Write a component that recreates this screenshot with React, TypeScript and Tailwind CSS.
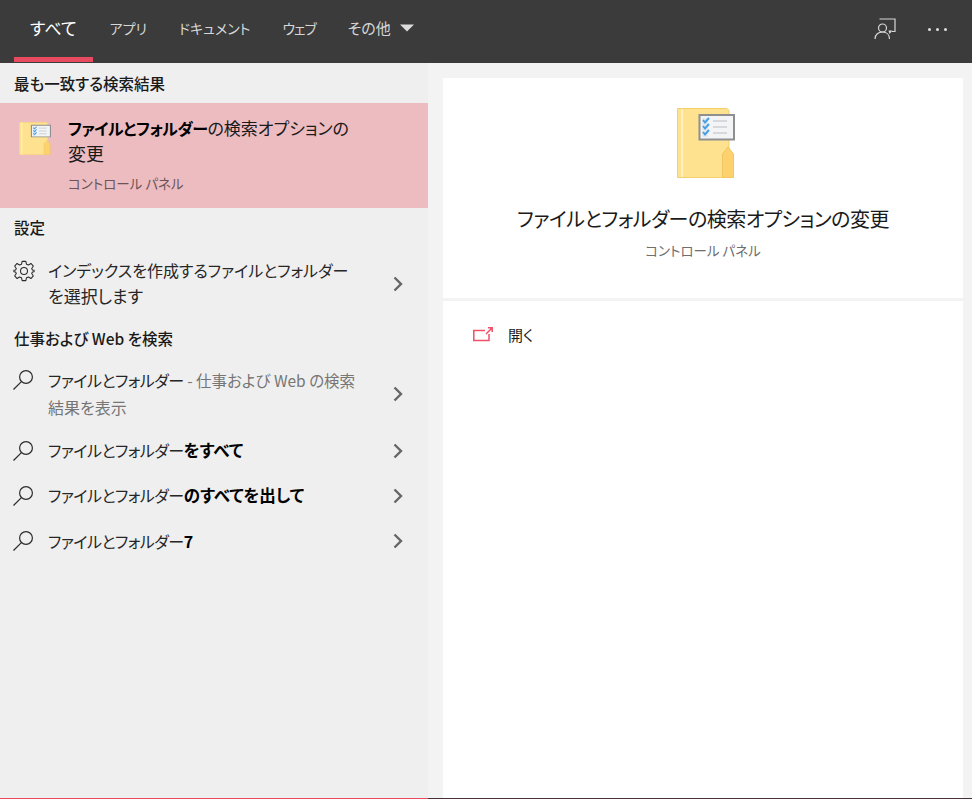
const FONT = "font-['Noto_Sans_CJK_JP','Noto_Sans',sans-serif] [font-feature-settings:'palt']"

const tabs = [
  { label: "すべて", size: "text-[17px] border-[#e84a5f] text-white mr-px" },
  { label: "アプリ", size: "text-[14px] border-transparent text-[#d6d6d6]" },
  { label: "ドキュメント", size: "text-[14px] border-transparent text-[#d6d6d6]" },
  { label: "ウェブ", size: "text-[14px] tracking-[-1px] border-transparent text-[#d6d6d6]" },
  { label: "その他", size: "text-[15px] border-transparent text-[#d6d6d6]", caret: true },
]

function FolderIcon({ className }: { className: string }) {
  return (
    <svg viewBox="0 0 58 70" preserveAspectRatio="none" className={className}>
      <path d="M0.5 0.5H50L52 2.5V69.5H0.5Z" fill="#fee28f" stroke="#f3cf6e" />
      <path d="M5 1V69" stroke="#fff0bd" strokeWidth="2" />
      <path d="M45.5 69.5V46L51 39L56.5 46V69.5Z" fill="#fdd26e" stroke="#f0c65e" />
      <path d="M22.5 7H57V31.5H22.5Z" fill="#f2f4f6" stroke="#8f8f8f" strokeWidth="2" />
      <path d="M25 10H31V29H25Z" fill="#e3e9ee" />
      <path d="M26 12L28 14.5L32 10M26 18L28 20.5L32 16M26 24L28 26.5L32 22" stroke="#4a9fe2" strokeWidth="2" fill="none" />
      <path d="M36 13H50M36 19H50M36 25H50" stroke="#b9bcbf" strokeWidth="1.2" />
    </svg>
  )
}

function SearchIcon() {
  return (
    <svg viewBox="0 0 21 20" className="w-[21px] h-5 shrink-0" fill="none" stroke="#2b2b2b" strokeWidth="1.2">
      <circle cx="13" cy="7" r="6.4" />
      <path d="M8.4 11.6L0.5 19.5" />
    </svg>
  )
}

function GearIcon() {
  return (
    <svg viewBox="0 0 24 24" className="w-[22px] h-[22px] shrink-0" fill="none" stroke="#2b2b2b" strokeWidth="1.15" strokeLinejoin="round">
      <circle cx="12" cy="12" r="3.8" />
      <path d="M10 1.5H14L14.7 4.6L16.9 5.5L19.6 3.8L22.2 6.6L20.4 9.2L21.2 10.9L23 11.3V12.7L21.2 13.1L20.4 14.8L22.2 17.4L19.6 20.2L16.9 18.5L14.7 19.4L14 22.5H10L9.3 19.4L7.1 18.5L4.4 20.2L1.8 17.4L3.6 14.8L2.8 13.1L1 12.7V11.3L2.8 10.9L3.6 9.2L1.8 6.6L4.4 3.8L7.1 5.5L9.3 4.6Z" />
    </svg>
  )
}

function Chevron() {
  return (
    <svg viewBox="0 0 10 16" className="w-[10px] h-4 shrink-0 ml-auto mr-[25px]" fill="none" stroke="#666666" strokeWidth="2.4">
      <path d="M1.5 1.5L8 8L1.5 14.5" />
    </svg>
  )
}

function Heading({ children, h }: { children: React.ReactNode; h: string }) {
  return <div className={`flex items-center pl-[14px] text-[15.5px] font-medium text-[#1a1a1a] ${h}`}>{children}</div>
}

function Row({ icon, children, h, iconTop }: { icon: React.ReactNode; children: React.ReactNode; h: string; iconTop?: string }) {
  return (
    <div className={`flex items-center ${h}`}>
      <div className={`w-[48px] shrink-0 self-start flex pl-[13px] ${iconTop ?? "pt-[13px]"}`}>{icon}</div>
      <div className="text-[16px] text-[#262626]">{children}</div>
      <Chevron />
    </div>
  )
}

const Plain = () => <span className="tracking-[-0.5px]">ファイルとフォルダー</span>

export default function App() {
  return (
    <div className={`w-[972px] h-[799px] flex flex-col overflow-hidden ${FONT}`}>
      {/* top tabs */}
      <div className="h-[63px] shrink-0 bg-[#3b3b3b] flex items-stretch pl-[14px] pb-px">
        {tabs.map((t) => (
          <div key={t.label} className={`flex items-center px-4 pb-[1px] border-b-[5px] ${t.size}`}>
            {t.label}
            {t.caret && (
              <svg viewBox="0 0 14 8" className="w-[14px] h-2 ml-[9px]">
                <path d="M0 0.5H14L7 7.5Z" fill="#dcdcdc" />
              </svg>
            )}
          </div>
        ))}
        <div className="ml-auto flex items-center pb-[4px]">
          <svg viewBox="0 0 22 22" className="w-[22px] h-[22px] mr-[32px]" fill="none" stroke="#d8d8d8" strokeWidth="1.2">
            <path d="M5.5 1H21V13.5H18" />
            <path d="M14.5 12.5H18.5L15.5 16Z" fill="#d8d8d8" stroke="none" />
            <circle cx="8.5" cy="10" r="4" />
            <path d="M1 21C1 16.5 4.5 14 8.5 14C12.5 14 15.5 16.5 15.5 21" />
          </svg>
          <div className="flex gap-[5px] mr-[25px]">
            <span className="w-[3px] h-[3px] rounded-full bg-[#e0e0e0]" />
            <span className="w-[3px] h-[3px] rounded-full bg-[#e0e0e0]" />
            <span className="w-[3px] h-[3px] rounded-full bg-[#e0e0e0]" />
          </div>
        </div>
      </div>

      <div className="flex-1 flex min-h-0">
        {/* results */}
        <div className="w-[428px] shrink-0 bg-[#efefef] border-b border-[#e84a5f] flex flex-col">
          <Heading h="h-[40px] pt-[1px]">最も一致する検索結果</Heading>
          <div className="h-[105px] bg-[#edbcc1] flex pl-[19px]">
            <FolderIcon className="w-[32px] h-[33px] mt-[19px] shrink-0" />
            <div className="pl-[17px] pt-[12px]">
              <div className="text-[17px] leading-[25px] text-[#1a1a1a]">
                <span className="font-bold text-[16px] tracking-[-0.5px] text-black">ファイルとフォルダー</span>の検索オプションの
                <br />
                <span className="text-[18px]">変更</span>
              </div>
              <div className="text-[13.5px] leading-[20px] mt-[7px] text-[#6b5558]">コントロール パネル</div>
            </div>
          </div>
          <Heading h="h-[42px] pb-[2px]">設定</Heading>
          <Row h="h-[68px] leading-[25px] pb-px" iconTop="pt-[10px]" icon={<GearIcon />}>
            インデックスを作成するファイルとフォルダー
            <br />
            <span className="text-[17px]">を選択します</span>
          </Row>
          <Heading h="h-[42px]">仕事および Web を検索</Heading>
          <Row h="h-[68px] leading-[27px]" iconTop="pt-[10px]" icon={<SearchIcon />}>
            <Plain />
            <span className="text-[#767676] text-[15.5px]"> - 仕事および Web の検索</span>
            <br />
            <span className="text-[#767676]">結果を表示</span>
          </Row>
          <Row h="h-[45px]" icon={<SearchIcon />}>
            <Plain />
            <span className="font-bold text-black text-[16.5px]">をすべて</span>
          </Row>
          <Row h="h-[45px]" icon={<SearchIcon />}>
            <Plain />
            <span className="font-bold text-black text-[16.5px]">のすべてを出して</span>
          </Row>
          <Row h="h-[45px]" icon={<SearchIcon />}>
            <Plain />
            <span className="font-bold text-black">7</span>
          </Row>
        </div>

        {/* preview */}
        <div className="flex-1 bg-[#f3f3f3] border-b border-[#4a3038] flex flex-col pl-[15px] pr-[9px] pt-[15px]">
          <div className="h-[220px] bg-white flex flex-col items-center">
            <FolderIcon className="w-[58px] h-[70px] mt-[30px] ml-[5px]" />
            <div className="text-[20px] leading-[28px] mt-[27px] tracking-[-0.5px] text-[#1a1a1a]">ファイルとフォルダーの検索オプションの変更</div>
            <div className="text-[13.5px] leading-[20px] mt-[7px] text-[#6e6e6e]">コントロール パネル</div>
          </div>
          <div className="flex-1 mt-[3px] bg-white">
            <div className="flex items-center h-[68px] pl-[30px]">
              <svg viewBox="0 0 20 16" className="w-5 h-4 mr-[15px]" fill="none" stroke="#ef5068" strokeWidth="1.5">
                <path d="M16 7V13.5H0.8V3.5H12" />
                <path d="M13 7L19 1M15 0.8H19.2V5" />
              </svg>
              <span className="text-[15px] text-[#1a1a1a]">開く</span>
            </div>
          </div>
        </div>
      </div>
    </div>
  )
}
